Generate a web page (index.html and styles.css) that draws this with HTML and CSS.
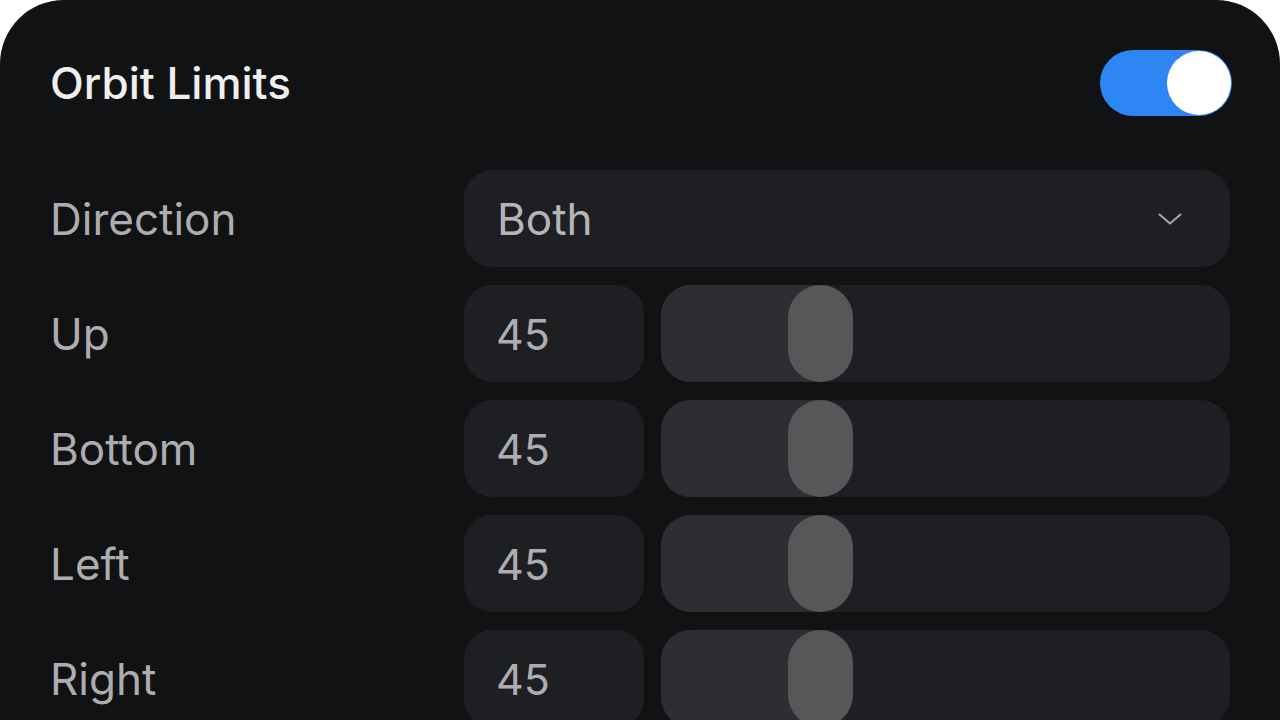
FILE: index.html
```html
<!DOCTYPE html>
<html lang="en">
<head>
    <meta charset="UTF-8">
    <title>Orbit Limits</title>
    <link rel="stylesheet" href="styles.css">
</head>
<body>
<div class="panel">
    <div class="panel-header">
        <h1>Orbit Limits</h1>
        <div class="toggle on"><div class="toggle-knob"></div></div>
    </div>

    <div class="rows">
        <div class="label">Direction</div>
        <div class="select">
            <span>Both</span>
            <svg class="chevron" width="26" height="14" viewBox="0 0 26 14">
                <path d="M2.5 2.5 L13 11.5 L23.5 2.5" fill="none" stroke="#a9a9ab" stroke-width="2" stroke-linecap="round" stroke-linejoin="round"/>
            </svg>
        </div>

        <div class="label">Up</div>
        <div class="field">
            <div class="number">45</div>
            <div class="slider"><div class="slider-fill"></div><div class="slider-thumb"></div></div>
        </div>

        <div class="label">Bottom</div>
        <div class="field">
            <div class="number">45</div>
            <div class="slider"><div class="slider-fill"></div><div class="slider-thumb"></div></div>
        </div>

        <div class="label">Left</div>
        <div class="field">
            <div class="number">45</div>
            <div class="slider"><div class="slider-fill"></div><div class="slider-thumb"></div></div>
        </div>

        <div class="label">Right</div>
        <div class="field">
            <div class="number">45</div>
            <div class="slider"><div class="slider-fill"></div><div class="slider-thumb"></div></div>
        </div>
    </div>
</div>
</body>
</html>
```

FILE: styles.css
```css
* {
    box-sizing: border-box;
}

body {
    margin: 0;
    background: #fff;
    font-family: Inter, "Noto Sans", sans-serif;
    height: 720px;
    overflow: hidden;
}

.panel {
    background: #111214;
    border-radius: 64px 64px 0 0;
    padding: 50px 50px 40px 50px;
    min-height: 800px;
}

.panel-header {
    display: flex;
    justify-content: space-between;
    align-items: center;
    height: 65px;
    margin-bottom: 55px;
}

h1 {
    margin: 0;
    color: #efefef;
    font-size: 44px;
    font-weight: 500;
}

.toggle {
    width: 132px;
    height: 66px;
    margin-right: -2px;
    border-radius: 33px;
    background: #2e86f5;
    padding: 1px 1px;
    display: flex;
    justify-content: flex-end;
}

.toggle-knob {
    width: 64px;
    height: 64px;
    border-radius: 50%;
    background: #fff;
}

.rows {
    display: grid;
    grid-template-columns: 414px 1fr;
    row-gap: 18px;
}

.label {
    color: #adadaf;
    font-size: 44px;
    display: flex;
    align-items: center;
    height: 97px;
}

.select {
    height: 97px;
    border-radius: 28px;
    background: #1e1f22;
    display: flex;
    align-items: center;
    justify-content: space-between;
    padding: 0 47px 0 33px;
    color: #b5b5b7;
    font-size: 44px;
}

.field {
    display: flex;
    gap: 17px;
    height: 97px;
}

.number {
    width: 180px;
    border-radius: 28px;
    background: #1e1f22;
    color: #adadaf;
    font-size: 43px;
    display: flex;
    align-items: center;
    padding-left: 32px;
}

.slider {
    flex: 1;
    position: relative;
    border-radius: 30px;
    background: #1e1f22;
    overflow: hidden;
}

.slider-fill {
    position: absolute;
    left: 0;
    top: 0;
    bottom: 0;
    width: 160px;
    background: #2d2e31;
}

.slider-thumb {
    position: absolute;
    left: 127px;
    top: 0;
    width: 65px;
    height: 97px;
    border-radius: 33px;
    background: #57575a;
}
```
